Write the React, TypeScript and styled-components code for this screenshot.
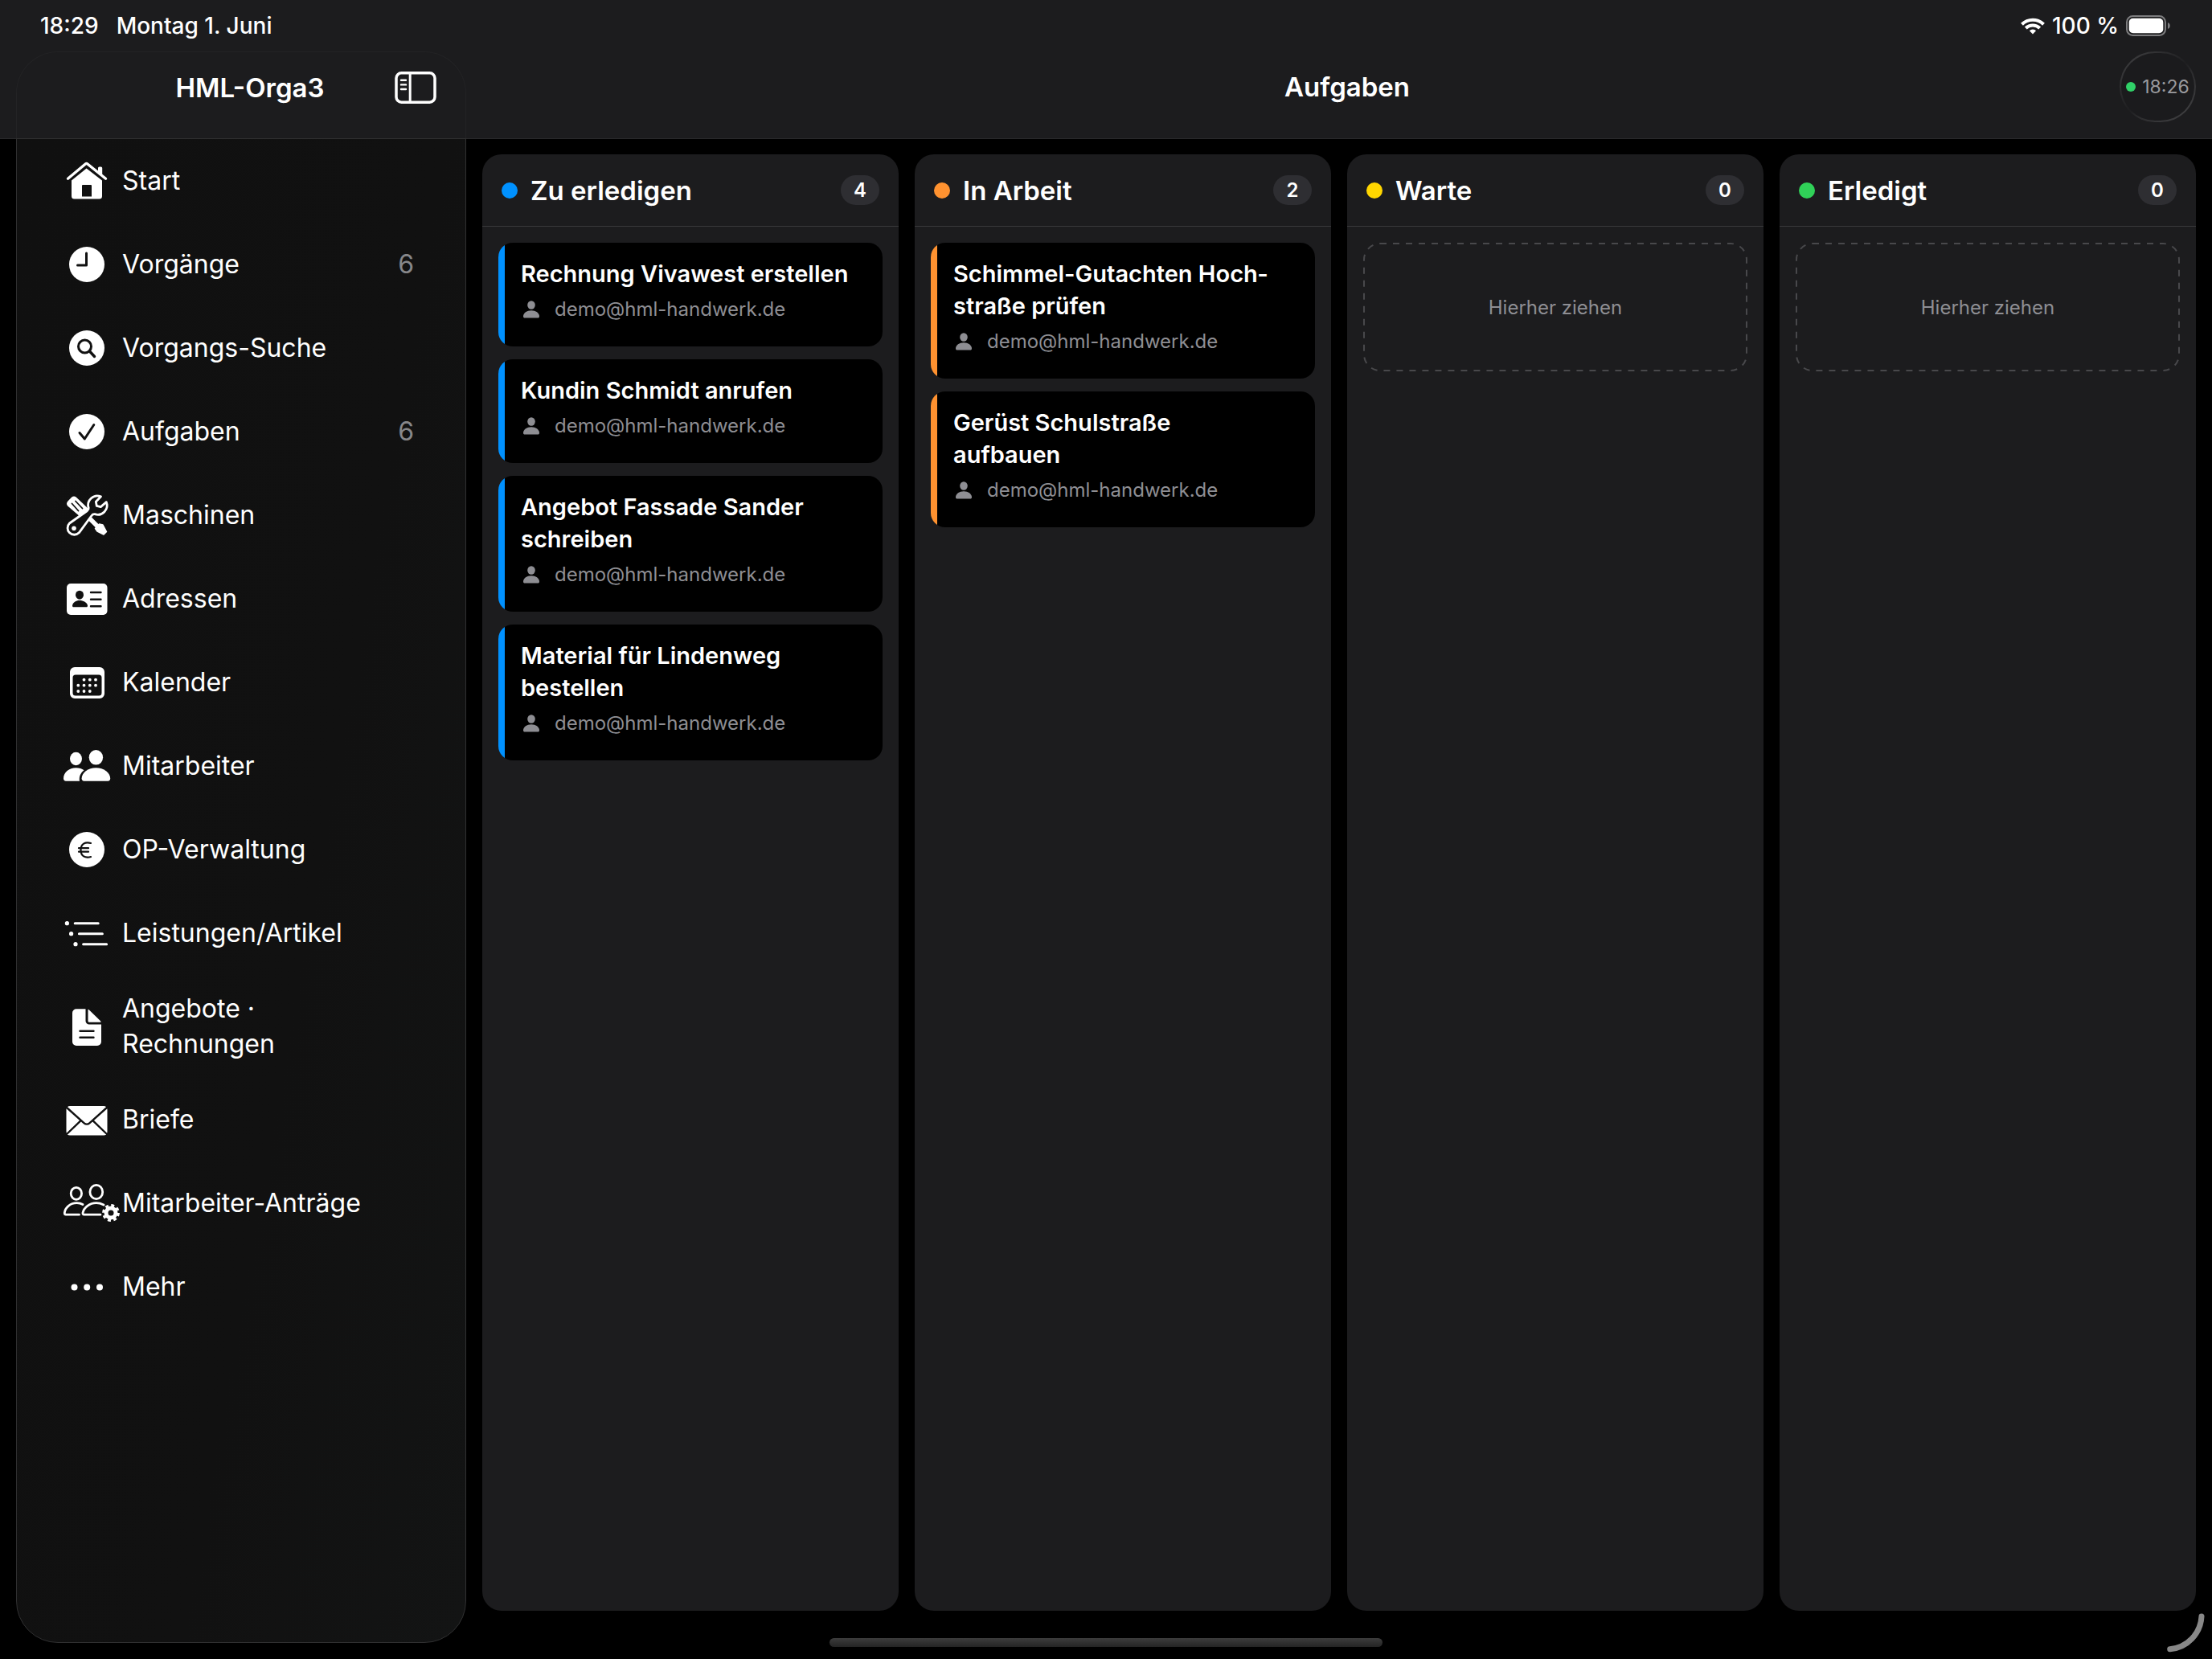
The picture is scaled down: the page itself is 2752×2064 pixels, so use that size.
import React from "react";
import styled, { createGlobalStyle } from "styled-components";

const GlobalStyle = createGlobalStyle`
  *, *::before, *::after { box-sizing: border-box; }
  body {
    margin: 0;
    background: #000;
    color: #fff;
    font-family: Inter, "Liberation Sans", sans-serif;
  }
  h1, h2, h3, p, ul { margin: 0; padding: 0; }
  ul { list-style: none; }
`;

const Page = styled.div`
  position: relative;
  display: flex;
  flex-direction: column;
  min-height: 100vh;
  background: linear-gradient(#1c1c1e 172px, #29292b 172px 173px, #000 173px);
`;

const StatusBar = styled.div`
  display: flex;
  align-items: center;
  justify-content: space-between;
  height: 64px;
  padding: 0 52px 0 50px;
  font-size: 28px;
  font-weight: 500;
  line-height: 32px;
`;

const StatusGroup = styled.div<{ $gap: number }>`
  display: flex;
  align-items: center;
  gap: ${(p) => p.$gap}px;
`;

const Shell = styled.div`
  display: flex;
  flex: 1;
  padding: 0 20px 20px;
`;

const Sidebar = styled.aside`
  display: flex;
  flex-direction: column;
  flex: none;
  width: 560px;
`;

const SidebarHeader = styled.div`
  display: grid;
  grid-template-columns: 1fr auto;
  align-items: center;
  height: 108px;
  padding: 0 36px 20px 110px;
  border: 1px solid #232325;
  border-bottom: 0;
  border-radius: 52px 52px 0 0;
`;

const BarTitle = styled.h1`
  font-size: 33px;
  font-weight: 600;
  line-height: 40px;
  text-align: center;
`;

const IconButton = styled.button`
  display: flex;
  padding: 0;
  border: 0;
  background: none;
  color: inherit;
`;

const Nav = styled.nav`
  flex: 1;
  border: 1px solid #303031;
  border-radius: 0 0 52px 52px;
  background: linear-gradient(100deg, #101010, #111111 60%, #131414);
`;

const NavLink = styled.a`
  display: flex;
  align-items: center;
  gap: 12px;
  min-height: 104px;
  padding: 20px 64px 20px 55px;
  color: #fff;
  font-size: 32px;
  line-height: 44px;
  text-decoration: none;
`;

const NavLabel = styled.span`
  flex: 1;
`;

const NavCount = styled.span`
  color: #87878a;
`;

const NavIcon = styled.svg`
  flex: none;
  width: 64px;
  height: 64px;
  overflow: visible;
`;

const Detail = styled.main`
  display: flex;
  flex: 1;
  flex-direction: column;
  min-width: 0;
`;

const TopBar = styled.header`
  display: grid;
  grid-template-columns: 1fr auto 1fr;
  align-items: center;
  height: 108px;
  padding: 0 0 20px 20px;
`;

const TopTitle = styled(BarTitle)`
  grid-column: 2;
  padding-left: 20px;
`;

const SyncButton = styled.button`
  display: flex;
  grid-column: 3;
  align-items: center;
  justify-self: end;
  justify-content: center;
  gap: 8px;
  width: 95px;
  height: 88px;
  padding: 0;
  border: 2px solid transparent;
  border-radius: 44px;
  background:
    linear-gradient(#1b1b1d, #1b1b1d) padding-box,
    linear-gradient(140deg, #454547, #2c2c2e 30%, #1e1e20 50%, #2c2c2e 60%, #454547) border-box;
  color: #9a9a9e;
  font-family: inherit;
  font-size: 23px;
  line-height: 28px;
`;

const Dot = styled.span<{ $color: string; $size: number }>`
  flex: none;
  width: ${(p) => p.$size}px;
  height: ${(p) => p.$size}px;
  border-radius: 50%;
  background: ${(p) => p.$color};
`;

const Board = styled.div`
  display: grid;
  flex: 1;
  grid-template-columns: repeat(4, minmax(0, 1fr));
  gap: 20px;
  padding: 20px 0 40px 20px;
`;

const Column = styled.section`
  display: flex;
  flex-direction: column;
  overflow: hidden;
  border-radius: 24px;
  background: #1c1c1e;
`;

const ColumnHeader = styled.header`
  display: flex;
  align-items: center;
  gap: 16px;
  height: 90px;
  padding: 0 24px;
  border-bottom: 1px solid #3a3a3c;
`;

const ColumnTitle = styled.h2`
  flex: 1;
  font-size: 33px;
  font-weight: 600;
  line-height: 40px;
`;

const Count = styled.span`
  min-width: 48px;
  padding: 0 16px;
  border-radius: 20px;
  background: #2e2e32;
  font-size: 24px;
  font-weight: 600;
  line-height: 37px;
  text-align: center;
`;

const ColumnBody = styled.ul`
  display: flex;
  flex-direction: column;
  gap: 16px;
  padding: 20px;
`;

const Card = styled.li<{ $color: string }>`
  padding: 19px 20px 30px 28px;
  border-radius: 18px;
  background: linear-gradient(90deg, ${(p) => p.$color} 8px, #000 8px);
`;

const CardTitle = styled.h3`
  font-size: 29px;
  font-weight: 600;
  line-height: 40px;
  white-space: pre-line;
`;

const Assignee = styled.p`
  display: flex;
  align-items: center;
  gap: 16px;
  padding-top: 8px;
  color: #8e8e93;
  font-size: 24px;
  line-height: 32px;
`;

const DropZone = styled.li`
  position: relative;
  display: flex;
  align-items: center;
  justify-content: center;
  height: 160px;
  padding-top: 2px;
  color: #8e8e93;
  font-size: 24px;
  line-height: 32px;
`;

const DashedOutline = styled.svg`
  position: absolute;
  inset: 0;
  width: 100%;
  height: 100%;

  rect {
    x: 1px;
    y: 1px;
    width: calc(100% - 2px);
    height: calc(100% - 2px);
    fill: none;
    stroke: #48484b;
    stroke-width: 2px;
    stroke-dasharray: 8 8;
  }
`;

const HomeIndicator = styled.div`
  position: absolute;
  bottom: 15px;
  left: 50%;
  width: 25%;
  height: 11px;
  border-radius: 6px;
  background: linear-gradient(#3c3c3c, #242424);
  transform: translateX(-50%);
`;

const CornerHandle = styled.svg`
  position: absolute;
  right: 0;
  bottom: 0;
  width: 64px;
  height: 64px;
`;

const BG = "#111111";

const icons: Record<string, React.ReactNode> = {
  home: (
    <>
      <path d="M8.5 29.2 30.3 11a2 2 0 0 1 2.6 0L55.5 29.2" fill="none" stroke="#fff" strokeWidth="3.4" strokeLinecap="round" />
      <path d="M46 22V16a1.6 1.6 0 0 1 1.6-1.6h2A1.6 1.6 0 0 1 51.2 16v10z" fill="#fff" />
      <path d="M13 31.5 31.6 16.5 51 31.5V51a3.500 3.500 0 0 1-3.500 3.500h-31A3.500 3.500 0 0 1 13 51zM27 37a1 1 0 0 0-1 1v13.500h12V38a1 1 0 0 0-1-1z" fill="#fff" fillRule="evenodd" />
    </>
  ),
  clock: (
    <>
      <circle cx="32" cy="32" r="22" fill="#fff" />
      <path d="M31.5 18v15H20.5" fill="none" stroke={BG} strokeWidth="3" strokeLinecap="round" strokeLinejoin="round" />
    </>
  ),
  search: (
    <>
      <circle cx="32" cy="32" r="22" fill="#fff" />
      <circle cx="29.5" cy="30" r="8" fill="none" stroke={BG} strokeWidth="3" />
      <path d="m35.5 36 6 6.500" stroke={BG} strokeWidth="3.4" strokeLinecap="round" />
    </>
  ),
  check: (
    <>
      <circle cx="32" cy="32" r="22" fill="#fff" />
      <path d="m23 33.500 6.300 7.500L40.800 23.500" fill="none" stroke={BG} strokeWidth="3" strokeLinecap="round" strokeLinejoin="round" />
    </>
  ),
  tools: (
    <>
      <path d="M8.2 20.500a4.500 4.500 0 0 1 0-5.800L13 9.800a4.500 4.500 0 0 1 6 0L34.500 24.500 24.500 34.500z" fill="#fff" />
      <path d="m13.500 17.500 8 9M18 14.500l8.500 9" stroke={BG} strokeWidth="1.800" strokeLinecap="round" />
      <path d="M33 33.500 45.500 46" stroke="#fff" strokeWidth="5.500" />
      <path d="M42.500 48.500 47.500 43 52 44l4.500 8.500L53 56l-8-4z" fill="#fff" stroke="#fff" strokeWidth="1.500" strokeLinejoin="round" />
      <path
        d="M49.500 8.800A11.500 11.500 0 0 0 34.200 23Q34.500 25 32.500 26.500L10.500 42A8.300 8.300 0 1 0 22.300 53.800L38 32.500Q39.500 30.300 42 30.700A11.500 11.500 0 0 0 56.300 15.600L49.300 21.600 44.300 20.400 43.300 15.200Z"
        fill={BG}
        stroke="#fff"
        strokeWidth="2.800"
        strokeLinejoin="round"
      />
      <circle cx="16" cy="48.300" r="2.800" fill="#fff" />
    </>
  ),
  card: (
    <>
      <rect x="7" y="13" width="50.500" height="39" rx="5" fill="#fff" />
      <ellipse cx="23" cy="27.200" rx="5" ry="5.500" fill={BG} />
      <path d="M14 40.500c.5-4 4.500-6.500 9-6.500s9.500 2.500 10 6.500c0 1-.5 1.800-1.500 1.800h-16c-1 0-1.500-.8-1.500-1.800z" fill={BG} />
      <path d="M37 24h12.500M37 32.700h12.500M37 41.300h12.500" stroke={BG} strokeWidth="2.400" strokeLinecap="round" />
    </>
  ),
  calendar: (
    <>
      <path d="M17 13h31a6 6 0 0 1 6 6v27a6 6 0 0 1-6 6H17a6 6 0 0 1-6-6V19a6 6 0 0 1 6-6zM18 22.500a3.500 3.500 0 0 0-3.500 3.500v19a3.500 3.500 0 0 0 3.500 3.500h29a3.500 3.500 0 0 0 3.500-3.500V26a3.500 3.500 0 0 0-3.500-3.500z" fill="#fff" fillRule="evenodd" />
      {[[28.5, 28.7], [35.8, 28.7], [43, 28.7], [21.3, 35.7], [28.5, 35.7], [35.8, 35.7], [43, 35.7], [21.3, 43], [28.5, 43], [35.8, 43]].map(([x, y]) => (
        <circle key={`${x}-${y}`} cx={x} cy={y} r="1.9" fill="#fff" />
      ))}
    </>
  ),
  people: (
    <>
      <ellipse cx="18.500" cy="23" rx="7.500" ry="8.200" fill="#fff" />
      <ellipse cx="43.400" cy="21.300" rx="8.700" ry="9.300" fill="#fff" />
      <path d="M3 47.500C3 40 10 34.300 18.500 34.300c4 0 7.500 1 10 3-4 3-6.500 8-5.500 13.400H6c-2 0-3-1.200-3-3.200z" fill="#fff" />
      <path d="M25.600 47.500c0-7 8-13.200 17.800-13.200s17.800 6.200 17.800 13.200c0 2-1 3.200-3 3.200H28.600c-2 0-3-1.200-3-3.200z" fill="#fff" />
    </>
  ),
  euro: (
    <>
      <circle cx="32" cy="32" r="22" fill="#fff" />
      <path d="M37 24c-7-2-12.500 1-12.500 8.500s5.500 10.500 12.500 8.500M22 30.200h12M22 34.700h12" fill="none" stroke={BG} strokeWidth="2.200" strokeLinecap="round" />
    </>
  ),
  list: (
    <>
      <path d="M17.200 19.700h29M22.400 32.700h29M27.600 45.700h29" stroke="#fff" strokeWidth="3" strokeLinecap="round" />
      <circle cx="7.400" cy="19.700" r="2.600" fill="#fff" />
      <circle cx="12.600" cy="32.700" r="2.600" fill="#fff" />
      <circle cx="18" cy="45.700" r="2.600" fill="#fff" />
    </>
  ),
  doc: (
    <>
      <path d="M19 10.300h11.500V25a4.500 4.500 0 0 0 4.500 4.500h15V51a5 5 0 0 1-5 5H19a5 5 0 0 1-5-5V15.300a5 5 0 0 1 5-5z" fill="#fff" />
      <path d="M33.500 10.800c1 .3 1.600.8 2.200 1.500L48.300 24.500c.7.700 1.200 1.300 1.400 2.200H35a1.500 1.500 0 0 1-1.500-1.500z" fill="#fff" />
      <path d="M23.500 37.700h17M23.500 45.700h17" stroke={BG} strokeWidth="2.400" strokeLinecap="round" />
    </>
  ),
  mail: (
    <>
      <rect x="6.500" y="15" width="51" height="36.500" rx="4.500" fill="#fff" />
      <path d="m6.500 16.500 22.200 19.800a5 5 0 0 0 6.600 0L57.500 16.500M6.500 50.500l17.800-17.200M57.500 50.500 39.700 33.300" fill="none" stroke={BG} strokeWidth="2.400" />
    </>
  ),
  peopleGear: (
    <>
      <g fill="none" stroke="#fff" strokeWidth="2.800" strokeLinecap="round" strokeLinejoin="round">
        <ellipse cx="18.900" cy="19.800" rx="6.700" ry="7.500" />
        <ellipse cx="43.800" cy="18" rx="7.900" ry="8.700" />
        <path d="M27 33.500c-2-1.200-4.500-1.800-7.500-1.800-8 0-14.500 5.600-15.200 12.300 0 1.500.5 2.200 1.700 2.200h16.500" />
        <path d="M53 34c-3-1.500-6-2.300-9.200-2.300-8.500 0-15.500 5.600-16.800 12.300-.2 1.500.5 2.200 1.700 2.200H49" />
      </g>
      <circle cx="62" cy="44" r="6" fill="none" stroke="#fff" strokeWidth="5" />
      <circle cx="62" cy="44" r="9.300" fill="none" stroke="#fff" strokeWidth="3.200" strokeDasharray="3.9 3.4" />
    </>
  ),
  more: (
    <>
      <circle cx="16.500" cy="32.500" r="4" fill="#fff" />
      <circle cx="32.200" cy="32.500" r="4" fill="#fff" />
      <circle cx="48" cy="32.500" r="4" fill="#fff" />
    </>
  ),
};

const navItems: { icon: string; label: string; count?: number }[] = [
  { icon: "home", label: "Start" },
  { icon: "clock", label: "Vorgänge", count: 6 },
  { icon: "search", label: "Vorgangs-Suche" },
  { icon: "check", label: "Aufgaben", count: 6 },
  { icon: "tools", label: "Maschinen" },
  { icon: "card", label: "Adressen" },
  { icon: "calendar", label: "Kalender" },
  { icon: "people", label: "Mitarbeiter" },
  { icon: "euro", label: "OP-Verwaltung" },
  { icon: "list", label: "Leistungen/Artikel" },
  { icon: "doc", label: "Angebote · Rechnungen" },
  { icon: "mail", label: "Briefe" },
  { icon: "peopleGear", label: "Mitarbeiter-Anträge" },
  { icon: "more", label: "Mehr" },
];

const columns: { title: string; color: string; tasks: string[] }[] = [
  {
    title: "Zu erledigen",
    color: "#0091ff",
    tasks: [
      "Rechnung Vivawest erstellen",
      "Kundin Schmidt anrufen",
      "Angebot Fassade Sander schreiben",
      "Material für Lindenweg bestellen",
    ],
  },
  {
    title: "In Arbeit",
    color: "#ff9230",
    tasks: ["Schimmel-Gutachten Hoch\u00ADstraße prüfen", "Gerüst Schulstraße\naufbauen"],
  },
  { title: "Warte", color: "#ffd600", tasks: [] },
  { title: "Erledigt", color: "#30d158", tasks: [] },
];

const PersonIcon = () => (
  <svg width="26" height="24" viewBox="0 0 26 24" fill="#8e8e93" aria-hidden="true">
    <ellipse cx="13" cy="6.500" rx="4.800" ry="5.200" />
    <path d="M3 20.500c0-4 4.500-7.200 10-7.200s10 3.200 10 7.200c0 1.400-.7 2-2 2H5c-1.300 0-2-.6-2-2z" />
  </svg>
);

const SidebarIcon = () => (
  <svg width="52" height="40" viewBox="0 0 52 40" fill="none" stroke="#fff" aria-hidden="true">
    <rect x="2" y="1.800" width="48" height="36.400" rx="6.500" strokeWidth="3.500" />
    <path d="M19.200 2v36" strokeWidth="3" />
    <path d="M8 10.800h6M8 16.400h6M8 22h6" strokeWidth="2.400" strokeLinecap="round" />
  </svg>
);

const WifiIcon = () => (
  <svg width="30" height="21" viewBox="0 0 30 21" fill="none" stroke="#fff" aria-hidden="true">
    <path d="M1.500 8.200a19.300 19.300 0 0 1 27 0" strokeWidth="4" />
    <path d="M6.300 13a12.500 12.500 0 0 1 17.400 0" strokeWidth="4" />
    <path d="M15 20.500 10.900 16.300a5.800 5.800 0 0 1 8.200 0z" fill="#fff" stroke="none" />
  </svg>
);

const BatteryIcon = () => (
  <svg width="55" height="26" viewBox="0 0 55 26" aria-hidden="true">
    <rect x="1" y="1" width="48" height="24" rx="7.500" fill="none" stroke="#7d7d7f" strokeWidth="2" />
    <rect x="3.700" y="3.700" width="42.600" height="18.600" rx="5" fill="#fff" />
    <path d="M52 9c1.800.7 2.800 2.200 2.800 4s-1 3.300-2.800 4z" fill="#7d7d7f" />
  </svg>
);

export default function App() {
  return (
    <>
      <GlobalStyle />
      <Page>
        <StatusBar>
          <StatusGroup $gap={22}>
            <span>18:29</span>
            <span>Montag 1. Juni</span>
          </StatusGroup>
          <StatusGroup $gap={9}>
            <WifiIcon />
            <span>100 %</span>
            <BatteryIcon />
          </StatusGroup>
        </StatusBar>
        <Shell>
          <Sidebar>
            <SidebarHeader>
              <BarTitle>HML-Orga3</BarTitle>
              <IconButton type="button" aria-label="Seitenleiste einblenden">
                <SidebarIcon />
              </IconButton>
            </SidebarHeader>
            <Nav>
              {navItems.map((item) => (
                <NavLink key={item.label} href="#">
                  <NavIcon viewBox="0 0 64 64" aria-hidden="true">
                    {icons[item.icon]}
                  </NavIcon>
                  <NavLabel>{item.label}</NavLabel>
                  {item.count !== undefined && <NavCount>{item.count}</NavCount>}
                </NavLink>
              ))}
            </Nav>
          </Sidebar>
          <Detail>
            <TopBar>
              <TopTitle>Aufgaben</TopTitle>
              <SyncButton type="button">
                <Dot $color="#30d168" $size={12} />
                18:26
              </SyncButton>
            </TopBar>
            <Board>
              {columns.map((column) => (
                <Column key={column.title}>
                  <ColumnHeader>
                    <Dot $color={column.color} $size={20} />
                    <ColumnTitle>{column.title}</ColumnTitle>
                    <Count>{column.tasks.length}</Count>
                  </ColumnHeader>
                  <ColumnBody>
                    {column.tasks.map((task) => (
                      <Card key={task} $color={column.color}>
                        <CardTitle>{task}</CardTitle>
                        <Assignee>
                          <PersonIcon />
                          demo@hml-handwerk.de
                        </Assignee>
                      </Card>
                    ))}
                    {column.tasks.length === 0 && (
                      <DropZone>
                        <DashedOutline aria-hidden="true">
                          <rect rx="20" />
                        </DashedOutline>
                        Hierher ziehen
                      </DropZone>
                    )}
                  </ColumnBody>
                </Column>
              ))}
            </Board>
          </Detail>
        </Shell>
        <HomeIndicator />
        <CornerHandle viewBox="0 0 64 64" aria-hidden="true">
          <path d="M51 11A43 43 0 0 1 11.700 51.700" fill="none" stroke="#888" strokeWidth="7" strokeLinecap="round" />
        </CornerHandle>
      </Page>
    </>
  );
}
